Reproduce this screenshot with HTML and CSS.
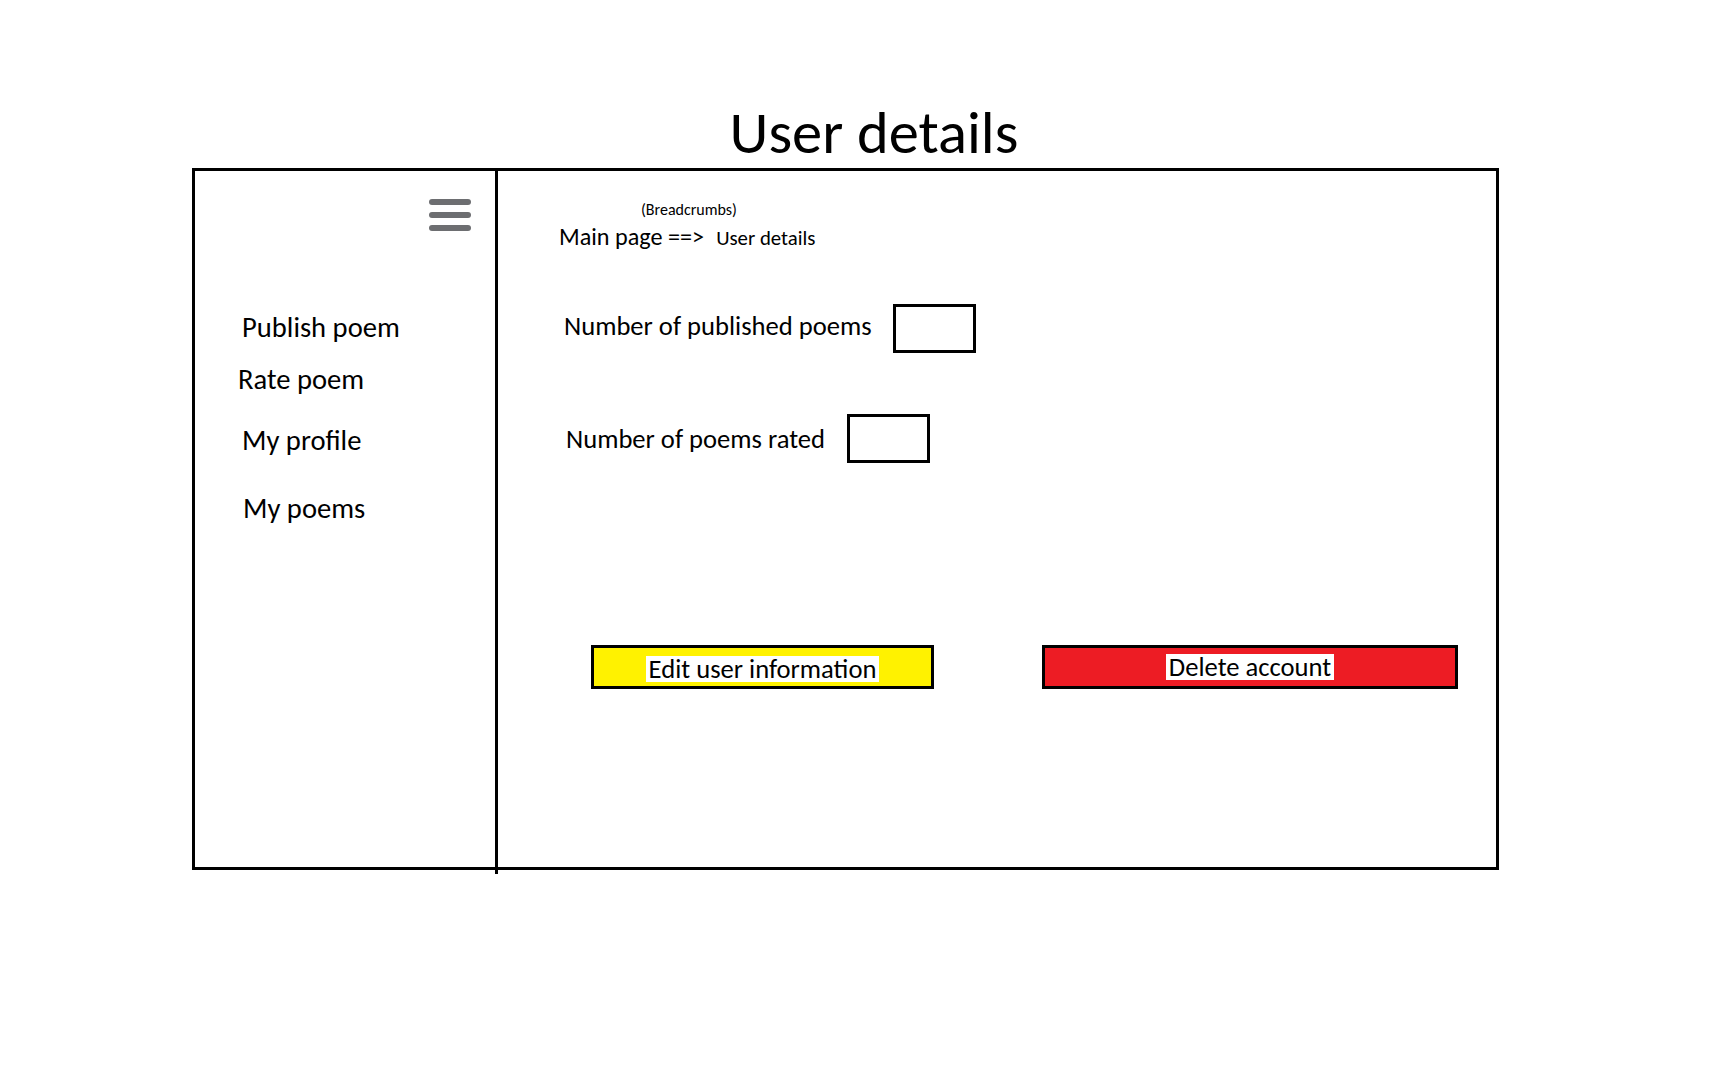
FILE: index.html
```html
<!DOCTYPE html>
<html lang="en">
<head>
<meta charset="utf-8">
<title>User details</title>
<link rel="stylesheet" href="styles.css">
</head>
<body>
<h1 class="page-title">User details</h1>
<div class="frame">
  <aside class="sidebar">
    <div class="menu-row">
      <svg class="hamburger" width="42" height="32" viewBox="0 0 42 32" aria-hidden="true">
        <rect x="0" y="0" width="42" height="6" rx="3" fill="#6d6e71"/>
        <rect x="0" y="13" width="42" height="6" rx="3" fill="#6d6e71"/>
        <rect x="0" y="26" width="42" height="6" rx="3" fill="#6d6e71"/>
      </svg>
    </div>
    <nav class="nav">
      <a class="nav-item nav-publish">Publish poem</a>
      <a class="nav-item nav-rate">Rate poem</a>
      <a class="nav-item nav-profile">My profile</a>
      <a class="nav-item nav-poems">My poems</a>
    </nav>
  </aside>
  <main class="content">
    <div class="crumb-label">(Breadcrumbs)</div>
    <div class="crumbs"><span class="crumb-main">Main page ==&gt;</span><span class="crumb-current">User details</span></div>
    <div class="stat stat-published">
      <span class="stat-label">Number of published poems</span>
      <span class="stat-box"></span>
    </div>
    <div class="stat stat-rated">
      <span class="stat-label">Number of poems rated</span>
      <span class="stat-box"></span>
    </div>
    <div class="actions">
      <button class="btn btn-edit"><span class="btn-text">Edit user information</span></button>
      <button class="btn btn-delete"><span class="btn-text">Delete account</span></button>
    </div>
  </main>
</div>
</body>
</html>
```
FILE: styles.css
```css
* { box-sizing: border-box; }
html, body { margin: 0; padding: 0; background: #fff; }
body {
  font-family: Carlito, Calibri, Lato, "Liberation Sans", sans-serif;
  color: #000;
  width: 1730px;
  height: 1066px;
  overflow: hidden;
}
.page-title {
  margin: 0;
  padding: 99px 0 0 18px;
  height: 168px;
  text-align: center;
  font-weight: 400;
  font-size: 60.5px;
  line-height: 66px;
}
.frame {
  position: relative;
  margin-left: 192px;
  width: 1307px;
  height: 702px;
  border: 3px solid #000;
  display: flex;
}
.sidebar {
  position: relative;
  width: 303px;
  border-right: 3px solid #000;
  flex: none;
}
.sidebar::after {
  content: "";
  position: absolute;
  right: -3px;
  bottom: -7px;
  width: 3px;
  height: 5px;
  background: #000;
}
.menu-row {
  display: flex;
  justify-content: flex-end;
  padding: 28px 24px 0 0;
}
.hamburger { display: block; }
.nav {
  display: flex;
  flex-direction: column;
  align-items: flex-start;
}
.nav-item {
  font-size: 28.6px;
  line-height: 34px;
  color: #000;
  text-decoration: none;
}
.nav-publish { margin: 80px 0 0 47px; }
.nav-rate { margin: 18px 0 0 43px; }
.nav-profile { margin: 27px 0 0 47px; }
.nav-poems { margin: 34px 0 0 48px; }

.content {
  flex: 1;
  display: flex;
  flex-direction: column;
  align-items: flex-start;
}
.crumb-label {
  margin: 29px 0 0 143px;
  font-size: 16px;
  line-height: 20px;
}
.crumbs {
  margin: 2px 0 0 61px;
  line-height: 30px;
  display: flex;
  align-items: baseline;
  gap: 12px;
}
.crumb-main { font-size: 24.2px; }
.crumb-current { font-size: 20.8px; }

.stat {
  display: flex;
  align-items: center;
}
.stat-label {
  font-size: 26.6px;
  line-height: 30px;
}
.stat-box {
  display: block;
  width: 83px;
  height: 49px;
  border: 3px solid #000;
}
.stat-published { margin: 51px 0 0 66px; gap: 21px; }
.stat-published .stat-label { margin-top: -5px; }
.stat-rated { margin: 61px 0 0 68px; gap: 22px; }

.actions {
  margin: 182px 0 0 93px;
  display: flex;
  gap: 108px;
}
.btn {
  height: 44px;
  border: 3px solid #000;
  padding: 0;
  font-family: inherit;
  color: #000;
  display: flex;
  align-items: center;
  justify-content: center;
  cursor: pointer;
}
.btn-text {
  background: #fff;
  font-size: 26.6px;
  line-height: 26px;
  padding: 0 3px;
}
.btn-edit { width: 343px; background: #fff200; }
.btn-edit .btn-text { margin-top: 3px; }
.btn-delete { width: 416px; background: #ed1c24; }
```
